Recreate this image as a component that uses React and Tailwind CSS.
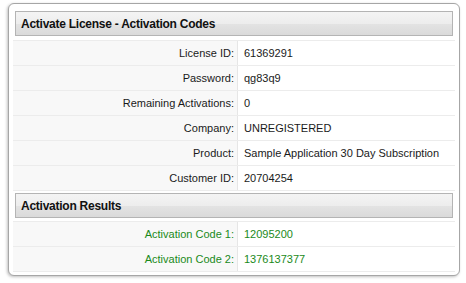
const codeRows = [
  { label: "License ID:", value: "61369291" },
  { label: "Password:", value: "qg83q9" },
  { label: "Remaining Activations:", value: "0" },
  { label: "Company:", value: "UNREGISTERED" },
  { label: "Product:", value: "Sample Application 30 Day Subscription" },
  { label: "Customer ID:", value: "20704254" },
];

const resultRows = [
  { label: "Activation Code 1:", value: "12095200" },
  { label: "Activation Code 2:", value: "1376137377" },
];

// glossy gray section bar
const SectionHeader = ({ title }) => (
  <div className="mx-[2px] h-[25px] flex items-center px-[5px] border border-[#b4b4b4] bg-[linear-gradient(#f4f4f4_0%,#ededed_50%,#e3e3e3_52%,#dadada_100%)]">
    <span className="text-[12px] font-bold tracking-[-0.25px] text-[#111]">{title}</span>
  </div>
);

const Row = ({ label, value, green }) => (
  <div className="flex h-[25px] border-b border-[#ececec]">
    <div
      className={`w-[225px] shrink-0 flex items-center justify-end pr-[3px] bg-[#f8f8f8] border-r border-[#e6e6e6] ${green ? "text-[#1a8a1a]" : "text-[#1a1a1a]"}`}
    >
      {label}
    </div>
    <div
      className={`flex-1 flex items-center pl-[6px] bg-white ${green ? "text-[#1a8a1a]" : "text-[#1a1a1a]"}`}
    >
      {value}
    </div>
  </div>
);

export default function App() {
  return (
    <div
      className="w-[466px] h-[283px] bg-white pl-2 pt-[3px] text-[11px]"
      style={{ fontFamily: '"Liberation Sans", Arial, sans-serif' }}
    >
      <div className="w-[452px] h-[273px] rounded-[6px] border border-[#a6a6a6] bg-white px-1 pt-[7px] shadow-[-1px_1px_3px_rgba(0,0,0,0.25)]">
        <SectionHeader title="Activate License - Activation Codes" />
        <div className="mt-[4px] border-t border-[#ececec]">
          {codeRows.map((r) => (
            <Row key={r.label} {...r} />
          ))}
        </div>
        <div className="mt-[2px]">
          <SectionHeader title="Activation Results" />
        </div>
        <div className="mt-[3px] border-t border-[#ececec]">
          {resultRows.map((r) => (
            <Row key={r.label} {...r} green />
          ))}
        </div>
      </div>
    </div>
  );
}
